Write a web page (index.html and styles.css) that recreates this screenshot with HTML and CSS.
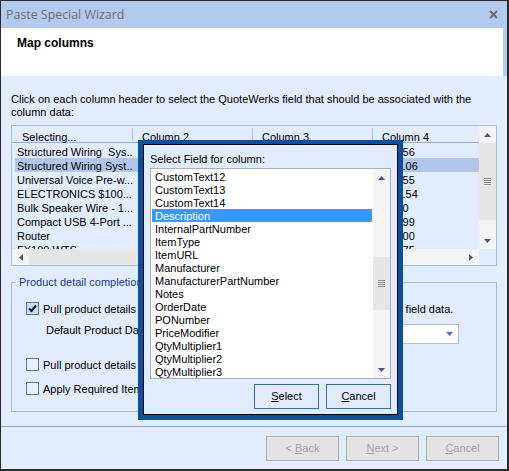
FILE: index.html
```html
<!DOCTYPE html>
<html>
<head>
<meta charset="utf-8">
<title>Paste Special Wizard</title>
<link rel="stylesheet" href="styles.css">
</head>
<body>
<div class="window">
  <div class="titlebar">
    <span class="title">Paste Special Wizard</span>
    <svg class="close" width="9" height="9" viewBox="0 0 9 9"><path d="M1 1L8 8M8 1L1 8" stroke="#6b6b6b" stroke-width="2"/></svg>
  </div>
  <div class="header"><h1 class="heading">Map columns</h1></div>
  <div class="content">
    <p class="instructions">Click on each column header to select the QuoteWerks field that should be associated with the<br>column data:</p>
    <div class="listview">
      <div class="lv-main">
        <div class="lv-header">
          <div class="lv-col h1c">Selecting...</div>
          <div class="lv-col h2c">Column 2</div>
          <div class="lv-col h3c">Column 3</div>
          <div class="lv-col h4c">Column 4</div>
        </div>
        <div class="lv-rows">
          <div class="lv-row"><span class="cell c1">Structured Wiring  Sys...</span><span class="cell c2"></span><span class="cell c3"></span><span class="cell c4">1234.56</span></div>
          <div class="lv-row selected"><span class="cell c1">Structured Wiring Syst...</span><span class="cell c2"></span><span class="cell c3"></span><span class="cell c4">1,234.06</span></div>
          <div class="lv-row"><span class="cell c1">Universal Voice Pre-w...</span><span class="cell c2"></span><span class="cell c3"></span><span class="cell c4">2345.55</span></div>
          <div class="lv-row"><span class="cell c1">ELECTRONICS $100...</span><span class="cell c2"></span><span class="cell c3"></span><span class="cell c4">1,299.54</span></div>
          <div class="lv-row"><span class="cell c1">Bulk Speaker Wire - 1...</span><span class="cell c2"></span><span class="cell c3"></span><span class="cell c4">12,340</span></div>
          <div class="lv-row"><span class="cell c1">Compact USB 4-Port ...</span><span class="cell c2"></span><span class="cell c3"></span><span class="cell c4">4569.99</span></div>
          <div class="lv-row"><span class="cell c1">Router</span><span class="cell c2"></span><span class="cell c3"></span><span class="cell c4">2100.00</span></div>
          <div class="lv-row"><span class="cell c1">FX100 WTS</span><span class="cell c2"></span><span class="cell c3"></span><span class="cell c4">1234.75</span></div>
        </div>
      </div>
      <div class="vscroll">
        <div class="sb-btn"><svg width="7" height="4" viewBox="0 0 7 4"><path d="M3.5 0L7 4H0Z" fill="#4b5a78"/></svg></div>
        <div class="sb-thumb v-thumb"><svg width="7" height="7" viewBox="0 0 7 7"><path d="M0 0.5H7M0 2.5H7M0 4.5H7M0 6.5H7" stroke="#8c8c8c" stroke-width="1"/></svg></div>
        <div class="sb-space"></div>
        <div class="sb-btn"><svg width="7" height="4" viewBox="0 0 7 4"><path d="M0 0H7L3.5 4Z" fill="#4b5a78"/></svg></div>
      </div>
      <div class="hscroll">
        <div class="sb-btn-h"><svg width="4" height="7" viewBox="0 0 4 7"><path d="M4 0V7L0 3.5Z" fill="#4b5a78"/></svg></div>
        <div class="sb-thumb h-thumb"></div>
        <div class="sb-space"></div>
        <div class="sb-btn-h"><svg width="4" height="7" viewBox="0 0 4 7"><path d="M0 0V7L4 3.5Z" fill="#4b5a78"/></svg></div>
      </div>
      <div class="corner"></div>
    </div>
    <fieldset class="group">
      <legend class="group-title">Product detail completion</legend>
      <div class="group-body">
        <div class="check-row">
          <span class="checkbox checked"><svg width="11" height="11" viewBox="0 0 11 11"><path d="M2 5.5L4.5 8L9 2.5" fill="none" stroke="#111" stroke-width="2"/></svg></span>
          <span class="check-label">Pull product details from the product database based on the user selected field data.</span>
        </div>
        <div class="field-row">
          <span class="field-label">Default Product Database:</span>
          <span class="combo"><svg width="7" height="4" viewBox="0 0 7 4"><path d="M0 0H7L3.5 4Z" fill="#4e6fa8"/></svg></span>
        </div>
        <div class="check-row row3">
          <span class="checkbox"></span>
          <span class="check-label">Pull product details from the online catalog when not found</span>
        </div>
        <div class="check-row row4">
          <span class="checkbox"></span>
          <span class="check-label">Apply Required Item Fields rules</span>
        </div>
      </div>
    </fieldset>
  </div>
  <div class="footer">
    <div class="btn-disabled">&lt; <u>B</u>ack</div>
    <div class="btn-disabled"><u>N</u>ext &gt;</div>
    <div class="btn-disabled"><u>C</u>ancel</div>
  </div>

  <div class="popup">
    <div class="popup-frame">
      <div class="popup-label">Select Field for column:</div>
      <div class="listbox">
        <div class="lb-items">
          <div class="lb-item">CustomText12</div>
          <div class="lb-item">CustomText13</div>
          <div class="lb-item">CustomText14</div>
          <div class="lb-item selected">Description</div>
          <div class="lb-item">InternalPartNumber</div>
          <div class="lb-item">ItemType</div>
          <div class="lb-item">ItemURL</div>
          <div class="lb-item">Manufacturer</div>
          <div class="lb-item">ManufacturerPartNumber</div>
          <div class="lb-item">Notes</div>
          <div class="lb-item">OrderDate</div>
          <div class="lb-item">PONumber</div>
          <div class="lb-item">PriceModifier</div>
          <div class="lb-item">QtyMultiplier1</div>
          <div class="lb-item">QtyMultiplier2</div>
          <div class="lb-item">QtyMultiplier3</div>
        </div>
        <div class="lb-scroll">
          <div class="sb-btn"><svg width="7" height="4" viewBox="0 0 7 4"><path d="M3.5 0L7 4H0Z" fill="#4b5a78"/></svg></div>
          <div class="lb-gap"></div>
          <div class="sb-thumb lb-thumb"><svg width="7" height="7" viewBox="0 0 7 7"><path d="M0 0.5H7M0 2.5H7M0 4.5H7M0 6.5H7" stroke="#8c8c8c" stroke-width="1"/></svg></div>
          <div class="sb-space"></div>
          <div class="sb-btn"><svg width="7" height="4" viewBox="0 0 7 4"><path d="M0 0H7L3.5 4Z" fill="#4b5a78"/></svg></div>
        </div>
      </div>
      <div class="popup-buttons">
        <div class="btn"><u>S</u>elect</div>
        <div class="btn"><u>C</u>ancel</div>
      </div>
    </div>
  </div>
</div>
</body>
</html>
```

FILE: styles.css
```css
body {
  margin: 0;
  background: #ffffff;
  font-family: "Liberation Sans", Arial, sans-serif;
  font-size: 11px;
  color: #000;
}

.window {
  position: relative;
  width: 509px;
  height: 471px;
  box-sizing: border-box;
  border: 1px solid #2a2a2a;
  border-right-width: 2px;
  border-bottom-width: 2px;
  background: #b1caee;
  display: flex;
  flex-direction: column;
}

.titlebar {
  flex: none;
  height: 27px;
  display: flex;
  align-items: center;
  justify-content: space-between;
  padding: 0 9px 0 5px;
}

.title {
  font-family: "Open Sans", "Liberation Sans", sans-serif;
  font-size: 12.4px;
  color: #6e6e6e;
}

.close { display: block; }

.header {
  flex: none;
  height: 48px;
  margin-right: 4px;
  background: #ffffff;
}

.heading {
  margin: 0;
  padding: 8px 0 0 16px;
  font-size: 12px;
  line-height: 15px;
  font-weight: bold;
}

.content {
  flex: 1;
  background: #e1ecfd;
  padding: 17px 10px 0 10px;
}

.instructions {
  margin: 0;
  line-height: 13px;
}

/* List view */
.listview {
  margin-top: 6px;
  display: grid;
  grid-template-columns: 1fr 17px;
  grid-template-rows: 123px 16px;
  border: 1px solid #a9bfe0;
  background: #e1ecfd;
}

.lv-main { overflow: hidden; }

.lv-header {
  display: flex;
  height: 16px;
  border-bottom: 1px solid #8eaee0;
}

.lv-col {
  position: relative;
  height: 16px;
  box-sizing: border-box;
  padding: 3px 0 0 9px;
  line-height: 16px;
  white-space: nowrap;
}

.lv-col::after {
  content: "";
  position: absolute;
  right: 0;
  top: 2px;
  bottom: 1px;
  width: 1px;
  background: #aac4ec;
}

.h1c { width: 121px; padding-left: 10px; }
.h2c { width: 120px; }
.h3c { width: 120px; }
.h4c { flex: 1; }
.h4c::after { display: none; }

.lv-rows {
  height: 106px;
  box-sizing: border-box;
  padding: 1px 0 0 3px;
  overflow: hidden;
}

.lv-row {
  display: flex;
  height: 14px;
}

.lv-row.selected { background: #b1c6ea; }

.cell {
  box-sizing: border-box;
  height: 14px;
  padding: 1px 0 0 2px;
  line-height: 14px;
  white-space: pre;
  overflow: hidden;
}

.c1 { width: 118px; }
.c2 { width: 120px; }
.c3 { width: 120px; }
.c4 { flex: 1; }

.vscroll,
.lb-scroll {
  background: #f4f4f4;
  display: flex;
  flex-direction: column;
}

.sb-btn {
  height: 17px;
  flex: none;
  display: flex;
  align-items: center;
  justify-content: center;
}

.sb-btn svg, .sb-btn-h svg, .sb-thumb svg, .combo svg { display: block; }

.sb-thumb {
  background: #e6e6e6;
  display: flex;
  align-items: center;
  justify-content: center;
  flex: none;
}

.v-thumb { height: 77px; }
.sb-space { flex: 1; }

.hscroll {
  background: #f4f4f4;
  display: flex;
}

.sb-btn-h {
  width: 17px;
  flex: none;
  display: flex;
  align-items: center;
  justify-content: center;
}

.h-thumb { width: 300px; }

.corner { background: #e1ecfd; }

/* Group box */
.group {
  margin: 10px 0 0 0;
  padding: 13px 0 16px 0;
  border: 1px solid #a3bde5;
  min-width: 0;
}

.group-title {
  margin-left: 3px;
  padding: 0 4px;
  line-height: 13px;
  color: #1d3f8a;
}

.group-body {
  padding: 0 37px 0 14px;
}

.check-row {
  display: flex;
  align-items: center;
  height: 13px;
}

.row3 { margin-top: 14px; }
.row4 { margin-top: 11px; }

.checkbox {
  width: 13px;
  height: 13px;
  box-sizing: border-box;
  border: 1px solid #4f78ad;
  background: #e8f0fc;
  flex: none;
  display: flex;
  align-items: center;
  justify-content: center;
}

.checkbox.checked { background: #c9dbf4; }

.check-label {
  margin-left: 4px;
  padding-top: 2px;
  line-height: 13px;
  white-space: nowrap;
}

.field-row {
  display: flex;
  align-items: flex-start;
  margin-top: 9px;
  padding-left: 20px;
}

.field-label { line-height: 13px; white-space: nowrap; }

.combo {
  margin-left: auto;
  width: 260px;
  height: 20px;
  box-sizing: border-box;
  border: 1px solid #a8bfe3;
  background: #ffffff;
  display: flex;
  align-items: center;
  justify-content: flex-end;
  padding-right: 5px;
}

/* Footer */
.footer {
  flex: none;
  height: 43px;
  box-sizing: border-box;
  border-top: 1px solid #8ba7cd;
  background: #e1ecfd;
  display: flex;
  justify-content: flex-end;
  align-items: flex-start;
  gap: 7px;
  padding: 9px 8px 0 0;
}

.btn-disabled {
  width: 73px;
  height: 25px;
  box-sizing: border-box;
  border: 1px solid #adadad;
  background: #e3e3e3;
  color: #a2a2a2;
  line-height: 23px;
  text-align: center;
}

/* Popup */
.popup {
  position: absolute;
  left: 137px;
  top: 139px;
  width: 265px;
  height: 280px;
  box-sizing: border-box;
  border-style: solid;
  border-color: #0c4f9f;
  border-width: 4px 5px 5px 5px;
}

.popup-frame {
  height: 100%;
  box-sizing: border-box;
  border: 1px solid #000;
  background: #e1ebfc;
  padding: 8px 5px 0 6px;
}

.popup-label {
  line-height: 13px;
}

.listbox {
  margin-top: 2px;
  width: 241px;
  height: 211px;
  box-sizing: border-box;
  border: 1px solid #a7b1c2;
  background: #ffffff;
  display: flex;
}

.lb-items {
  flex: 1;
  padding: 1px 1px 0 1px;
  overflow: hidden;
}

.lb-item {
  height: 13px;
  box-sizing: border-box;
  padding: 1px 0 0 3px;
  line-height: 13px;
  white-space: nowrap;
}

.lb-item.selected {
  background: #3399ff;
  color: #ffffff;
  outline: 1px dotted #c98540;
  outline-offset: -1px;
}

.lb-scroll { width: 17px; flex: none; }
.lb-gap { height: 71px; flex: none; }
.lb-thumb { height: 53px; }

.popup-buttons {
  display: flex;
  justify-content: flex-end;
  gap: 7px;
  margin-top: 5px;
  width: 241px;
}

.btn {
  width: 65px;
  height: 25px;
  box-sizing: border-box;
  border: 1px solid #3b6ea5;
  background: #e1ebfc;
  line-height: 23px;
  text-align: center;
}
```
